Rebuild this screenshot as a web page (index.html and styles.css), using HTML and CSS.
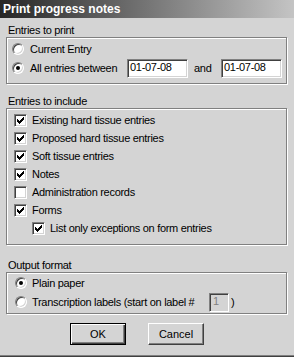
FILE: index.html
```html
<!DOCTYPE html>
<html lang="en">
<head>
  <meta charset="UTF-8" />
  <title>Print progress notes</title>
  <link rel="stylesheet" href="styles.css">
</head>
<body>
  <div class="dialog">
    <div class="titlebar">Print progress notes</div>

    <div class="content">
      <div class="group-label label-print">Entries to print</div>
      <div class="group group-print">
        <div class="row">
          <span class="radio"></span>
          <span>Current Entry</span>
        </div>
        <div class="row row-tall">
          <span class="radio checked"></span>
          <span class="between">All entries between</span>
          <span class="field date">01-07-08</span>
          <span class="and">and</span>
          <span class="field date">01-07-08</span>
        </div>
      </div>

      <div class="group-label label-include">Entries to include</div>
      <div class="group group-include">
        <div class="row"><span class="check on"></span><span>Existing hard tissue entries</span></div>
        <div class="row"><span class="check on"></span><span>Proposed hard tissue entries</span></div>
        <div class="row"><span class="check on"></span><span>Soft tissue entries</span></div>
        <div class="row"><span class="check on"></span><span>Notes</span></div>
        <div class="row"><span class="check"></span><span>Administration records</span></div>
        <div class="row"><span class="check on"></span><span>Forms</span></div>
        <div class="row sub"><span class="check on"></span><span>List only exceptions on form entries</span></div>
      </div>

      <div class="group-label label-output">Output format</div>
      <div class="group group-output">
        <div class="row">
          <span class="radio checked"></span>
          <span>Plain paper</span>
        </div>
        <div class="row row-tall">
          <span class="radio"></span>
          <span class="transcription">Transcription labels (start on label #</span>
          <span class="field number">1</span>
          <span class="paren">)</span>
        </div>
      </div>

      <div class="buttons">
        <div class="btn default">OK</div>
        <div class="btn">Cancel</div>
      </div>
    </div>
  </div>

  <script>
    // draw the tick inside every checked box
    document.querySelectorAll(".check.on").forEach(c => {
      c.innerHTML = '<svg width="7" height="7" viewBox="0 0 7 7" shape-rendering="crispEdges"><path d="M0 2L2 4L6 0H7V2L2 7L0 5Z" fill="#000"/></svg>';
    });
  </script>
</body>
</html>
```

FILE: styles.css
```css
* { box-sizing: border-box; margin: 0; padding: 0; }
body { font-family: "Liberation Sans", Arial, sans-serif; font-size: 11px; letter-spacing: -0.3px; color: #000; background: #d4d4d4; }

.dialog { width: 294px; height: 357px; border-bottom: 1px solid #404040; box-shadow: inset 0 -1px #808080; }
.titlebar { height: 18px; line-height: 18px; padding-left: 3px; color: #fff; font-weight: bold; font-size: 12px; letter-spacing: 0; background: linear-gradient(to right, #262626, #c4c4c4); }

.content { padding: 0 7px 0 6px; }
.group-label { height: 14px; line-height: 14px; padding-left: 2px; }
.label-print { margin-top: 5px; }
.label-include { margin-top: 10px; }
.label-output { margin-top: 13px; }

.group { border: 1px solid #808080; box-shadow: 1px 1px 0 #fff, inset 1px 1px 0 #fff; }
.group-print { padding: 2px 0 5px 5px; }
.group-include { padding: 2px 0 7px 7px; }
.group-output { padding: 1px 0 1px 8px; }

.row { display: flex; align-items: center; height: 18px; gap: 5px; white-space: nowrap; }
.row-tall { height: 20px; }
.group-print .row { gap: 6px; }
.row.sub { padding-left: 18px; }

.radio { width: 12px; height: 12px; flex: none; border-radius: 50%; background: #fff; border: 1px solid; border-color: #808080 #fff #fff #808080; box-shadow: inset 1px 1px 0 #404040, inset -1px -1px 0 #d4d4d4; display: flex; align-items: center; justify-content: center; }
.radio.checked::after { content: ""; width: 4px; height: 4px; border-radius: 50%; background: #000; }

.check { width: 13px; height: 13px; flex: none; background: #fff; border: 1px solid; border-color: #808080 #fff #fff #808080; box-shadow: inset 1px 1px 0 #404040, inset -1px -1px 0 #d4d4d4; display: flex; align-items: center; justify-content: center; }
.check svg { display: block; }

.field { height: 19px; line-height: 15px; padding-left: 2px; background: #fff; border: 1px solid; border-color: #808080 #fff #fff #808080; box-shadow: inset 1px 1px 0 #404040, inset -1px -1px 0 #d4d4d4; }
.field.date { width: 61px; }
.between { width: 91px; }
.and { width: 21px; margin-left: 0; }

.transcription { width: 172px; }
.field.number { width: 20px; color: #808080; background: #d4d4d4; padding-left: 3px; }
.paren { margin-left: -3px; }

.buttons { display: flex; gap: 22px; padding-left: 64px; margin-top: 9px; }
.btn { width: 56px; height: 22px; line-height: 20px; text-align: center; letter-spacing: 0; border: 1px solid; border-color: #fff #404040 #404040 #fff; box-shadow: inset -1px -1px 0 #808080; }
.btn.default { border: 1px solid #000; box-shadow: inset 1px 1px 0 #fff, inset -1px -1px 0 #404040, inset -2px -2px 0 #808080; }
```
